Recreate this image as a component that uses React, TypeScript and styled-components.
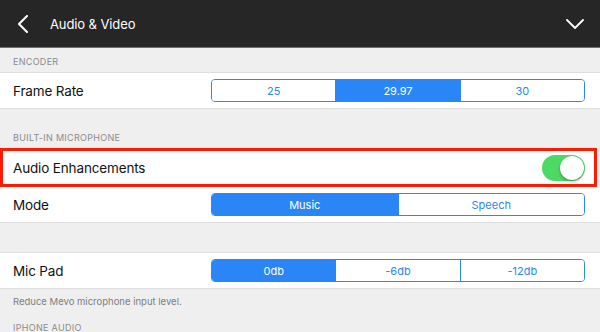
import React, { useState } from 'react';
import styled, { createGlobalStyle } from 'styled-components';

const GlobalStyle = createGlobalStyle`
  html, body {
    margin: 0;
    padding: 0;
    background: #efeff0;
  }
  body {
    font-family: Inter, "Noto Sans", "Liberation Sans", sans-serif;
    -webkit-font-smoothing: antialiased;
  }
`;

const Screen = styled.div`
  width: 600px;
  height: 332px;
  overflow: hidden;
  background: #efeff0;
  display: flex;
  flex-direction: column;
`;

const NavBar = styled.div`
  height: 47px;
  flex-shrink: 0;
  background: #262626;
  border-bottom: 1px solid #707070;
  display: flex;
  align-items: center;
  padding: 0 16px 0 17px;
  color: #ffffff;
`;

const NavTitle = styled.div`
  flex: 1;
  margin-left: 21px;
  font-size: 13px;
  font-weight: 400;
  letter-spacing: -0.1px;
`;

const IconButton = styled.div`
  display: flex;
  align-items: center;
  justify-content: center;
`;

const SectionHeader = styled.div<{ $top: number }>`
  padding: ${p => p.$top}px 13px 4px;
  font-size: 9px;
  color: #8b8b8d;
  text-transform: uppercase;
  letter-spacing: 0.3px;
  line-height: 12px;
`;

const Group = styled.div<{ $noTop?: boolean }>`
  background: #ffffff;
  border-top: ${p => (p.$noTop ? 'none' : '1px solid #dedee0')};
  border-bottom: 1px solid #dedee0;
`;

const Row = styled.div`
  height: 35px;
  display: flex;
  align-items: center;
  justify-content: space-between;
  padding: 0 15px 0 13px;
`;

const Highlight = styled.div`
  border: 3px solid #ff1a00;
  margin-right: 3px;
  background: #ffffff;

  ${Row} {
    height: 33px;
    padding: 0 9px 0 10px;
  }
`;

const Label = styled.div`
  font-size: 13.5px;
  letter-spacing: -0.15px;
  color: #111111;
`;

const Segmented = styled.div`
  width: 374px;
  height: 23px;
  display: flex;
  border: 1px solid #2a86f6;
  border-radius: 4px;
  overflow: hidden;
  box-sizing: border-box;
`;

const Segment = styled.div<{ $active: boolean }>`
  flex: 1;
  display: flex;
  align-items: center;
  justify-content: center;
  font-size: 11px;
  color: ${p => (p.$active ? '#ffffff' : '#2a86f6')};
  background: ${p => (p.$active ? '#2a86f6' : '#ffffff')};
  & + & {
    border-left: 1px solid #2a86f6;
  }
`;

const Toggle = styled.div<{ $on: boolean }>`
  width: 43px;
  height: 26px;
  border-radius: 13px;
  background: ${p => (p.$on ? '#4cd964' : '#e5e5ea')};
  display: flex;
  align-items: center;
  justify-content: ${p => (p.$on ? 'flex-end' : 'flex-start')};
  padding: 0 1px;
  box-sizing: border-box;
`;

const Knob = styled.div`
  width: 24px;
  height: 24px;
  border-radius: 50%;
  background: #ffffff;
  box-shadow: 0 2px 3px rgba(0, 0, 0, 0.25), 0 0 1px rgba(0, 0, 0, 0.2);
`;

const Footer = styled.div`
  padding: 7px 13px 0;
  font-size: 9.5px;
  color: #7d7d80;
  line-height: 12px;
`;

interface SegmentedControlProps {
  options: string[];
  initial: number;
}

const SegmentedControl: React.FC<SegmentedControlProps> = ({ options, initial }) => {
  const [selected, setSelected] = useState(initial);
  return (
    <Segmented>
      {options.map((o, i) => (
        <Segment key={o} $active={i === selected} onClick={() => setSelected(i)}>
          {o}
        </Segment>
      ))}
    </Segmented>
  );
};

export default function App() {
  const [enhance, setEnhance] = useState(true);

  return (
    <>
      <GlobalStyle />
      <Screen>
        <NavBar>
          <IconButton>
            <svg width="12" height="18" viewBox="0 0 12 18" fill="none">
              <path d="M10 1 L2 9 L10 17" stroke="#fff" strokeWidth="2" strokeLinecap="round" strokeLinejoin="round" />
            </svg>
          </IconButton>
          <NavTitle>Audio &amp; Video</NavTitle>
          <IconButton>
            <svg width="18" height="12" viewBox="0 0 18 12" fill="none">
              <path d="M1 2 L9 10 L17 2" stroke="#fff" strokeWidth="1.8" strokeLinecap="round" strokeLinejoin="round" />
            </svg>
          </IconButton>
        </NavBar>

        <SectionHeader $top={8}>Encoder</SectionHeader>
        <Group>
          <Row>
            <Label>Frame Rate</Label>
            <SegmentedControl options={['25', '29.97', '30']} initial={1} />
          </Row>
        </Group>

        <SectionHeader $top={23}>Built-in Microphone</SectionHeader>
        <Highlight>
          <Row>
            <Label>Audio Enhancements</Label>
            <Toggle $on={enhance} onClick={() => setEnhance(!enhance)}>
              <Knob />
            </Toggle>
          </Row>
        </Highlight>
        <Group $noTop>
          <Row>
            <Label>Mode</Label>
            <SegmentedControl options={['Music', 'Speech']} initial={0} />
          </Row>
        </Group>

        <SectionHeader $top={13}>&nbsp;</SectionHeader>
        <Group>
          <Row>
            <Label>Mic Pad</Label>
            <SegmentedControl options={['0db', '-6db', '-12db']} initial={0} />
          </Row>
        </Group>
        <Footer>Reduce Mevo microphone input level.</Footer>

        <SectionHeader $top={14}>iPhone Audio</SectionHeader>
      </Screen>
    </>
  );
}
